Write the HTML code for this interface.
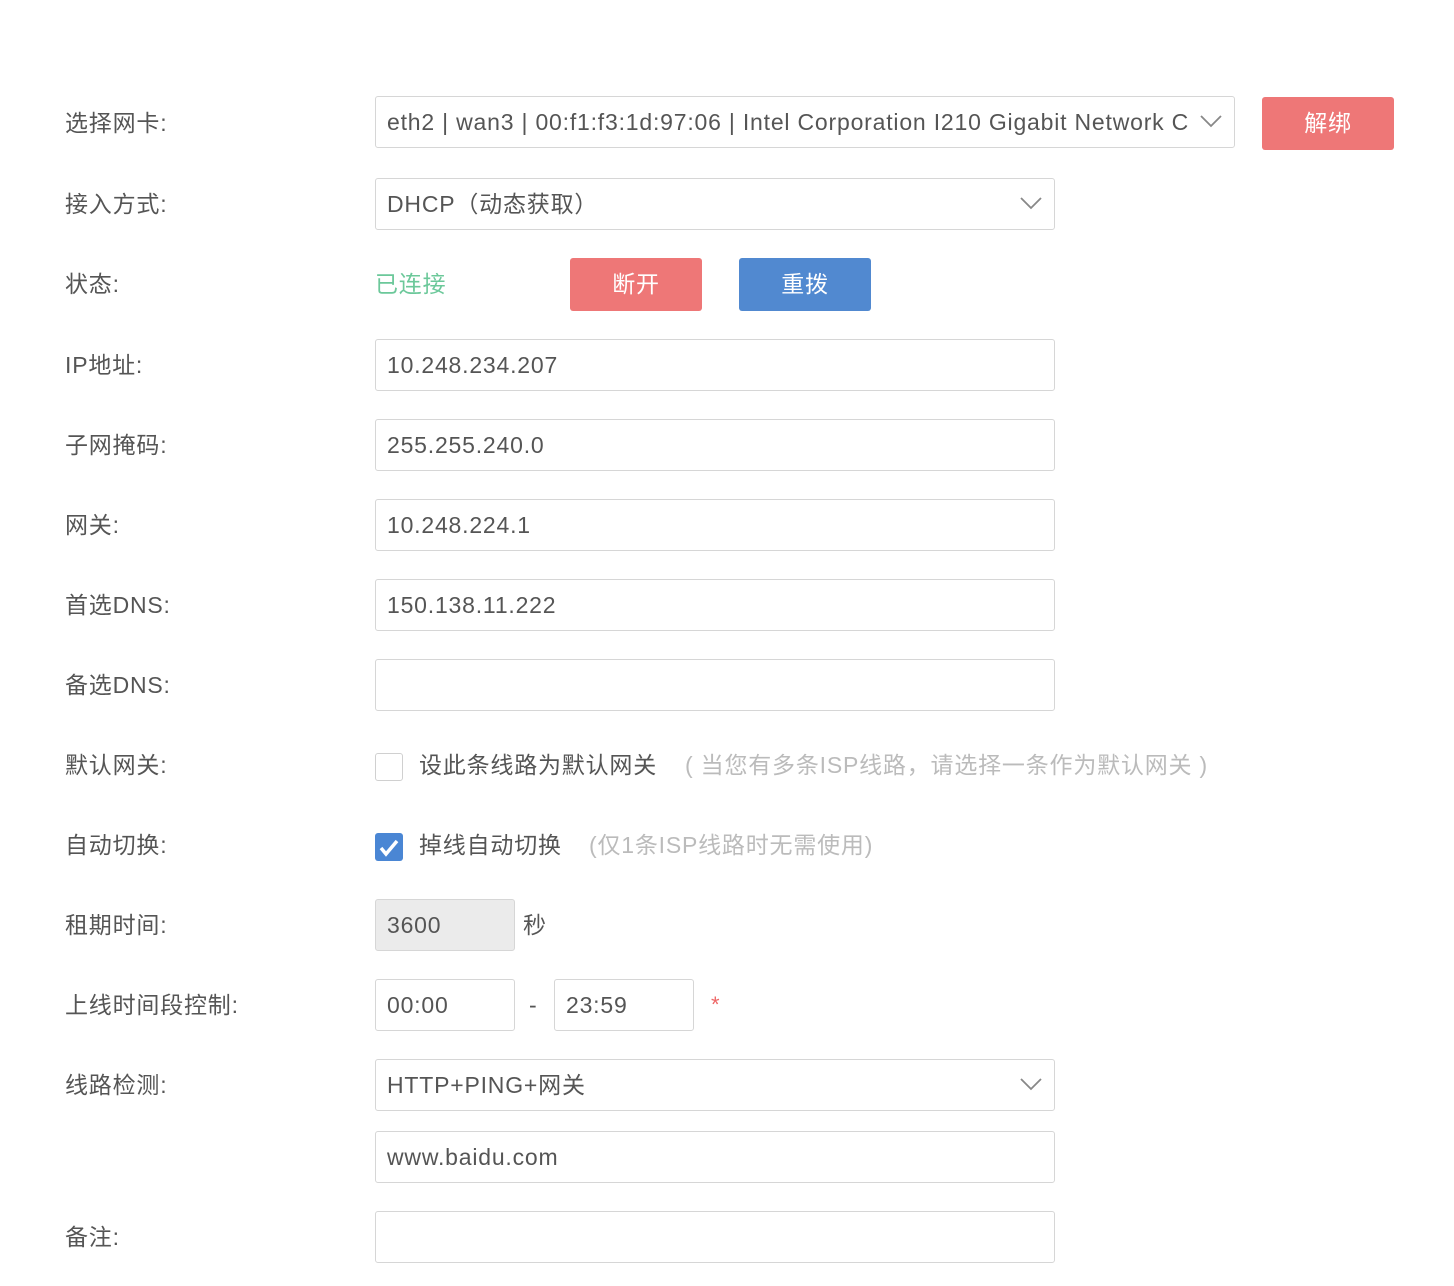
<!DOCTYPE html>
<html><head><meta charset="utf-8"><style>
body{margin:0;width:1454px;height:1286px;background:#fff;font-family:"Liberation Sans","Noto Sans CJK SC",sans-serif;color:#555;position:relative;overflow:hidden;letter-spacing:0.8px}
.a{position:absolute;white-space:nowrap}
.l{position:absolute;left:65px;font-size:23px;color:#555;line-height:30px}
.in{position:absolute;left:375px;width:678px;height:50px;border:1px solid #d6d6d6;border-radius:3px;font-size:23px;line-height:50px;padding-left:11px;box-sizing:content-box;color:#555;overflow:hidden;white-space:nowrap}
.chev{position:absolute;right:12px;top:17px}
.btn{position:absolute;width:132px;height:53px;border-radius:3px;color:#fff;font-size:23px;text-align:center;line-height:53px}
</style></head><body>
<div class="l" style="top:108px">选择网卡:</div>
<div class="in" style="top:96px;width:847px">eth2 | wan3 | 00:f1:f3:1d:97:06 | Intel Corporation I210 Gigabit Network C<svg class="chev" width="22" height="14" viewBox="0 0 22 14" style="background:#fff"><path d="M1 2l10 10 10-10" stroke="#888" stroke-width="1.8" fill="none"/></svg></div>
<div class="btn" style="left:1262px;top:97px;background:#ee7777">解绑</div>

<div class="l" style="top:189px">接入方式:</div>
<div class="in" style="top:178px;width:667px">DHCP（动态获取）<svg class="chev" width="22" height="14" viewBox="0 0 22 14"><path d="M1 2l10 10 10-10" stroke="#888" stroke-width="1.8" fill="none"/></svg></div>

<div class="l" style="top:269px">状态:</div>
<div class="a" style="left:375px;top:269px;font-size:23px;color:#6cc89a;line-height:30px">已连接</div>
<div class="btn" style="left:570px;top:258px;background:#ee7777">断开</div>
<div class="btn" style="left:739px;top:258px;background:#5189d0">重拨</div>

<div class="l" style="top:350px">IP地址:</div>
<div class="in" style="top:339px;width:667px">10.248.234.207</div>
<div class="l" style="top:430px">子网掩码:</div>
<div class="in" style="top:419px;width:667px">255.255.240.0</div>
<div class="l" style="top:510px">网关:</div>
<div class="in" style="top:499px;width:667px">10.248.224.1</div>
<div class="l" style="top:590px">首选DNS:</div>
<div class="in" style="top:579px;width:667px">150.138.11.222</div>
<div class="l" style="top:670px">备选DNS:</div>
<div class="in" style="top:659px;width:667px"></div>

<div class="l" style="top:750px">默认网关:</div>
<div class="a" style="left:375px;top:753px;width:26px;height:26px;border:1px solid #d0d0d0;border-radius:3px"></div>
<div class="a" style="left:419px;top:750px;font-size:23px;line-height:30px">设此条线路为默认网关</div>
<div class="a" style="left:685px;top:750px;font-size:23px;line-height:30px;color:#bbb">( 当您有多条ISP线路，请选择一条作为默认网关 )</div>

<div class="l" style="top:830px">自动切换:</div>
<div class="a" style="left:375px;top:833px;width:28px;height:28px;background:#4a86d4;border-radius:3px"><svg width="28" height="28" viewBox="0 0 28 28"><path d="M6 15l5 6 11-13" stroke="#fff" stroke-width="3.5" fill="none"/></svg></div>
<div class="a" style="left:419px;top:830px;font-size:23px;line-height:30px">掉线自动切换</div>
<div class="a" style="left:589px;top:830px;font-size:23px;line-height:30px;color:#bbb">(仅1条ISP线路时无需使用)</div>

<div class="l" style="top:910px">租期时间:</div>
<div class="in" style="top:899px;width:127px;background:#ebebeb">3600</div>
<div class="a" style="left:523px;top:910px;font-size:23px;line-height:30px">秒</div>

<div class="l" style="top:990px">上线时间段控制:</div>
<div class="in" style="top:979px;width:127px">00:00</div>
<div class="a" style="left:529px;top:990px;font-size:23px;line-height:30px">-</div>
<div class="in" style="top:979px;left:554px;width:127px">23:59</div>
<div class="a" style="left:711px;top:990px;font-size:22px;line-height:30px;color:#ee6666">*</div>

<div class="l" style="top:1070px">线路检测:</div>
<div class="in" style="top:1059px;width:667px">HTTP+PING+网关<svg class="chev" width="22" height="14" viewBox="0 0 22 14"><path d="M1 2l10 10 10-10" stroke="#888" stroke-width="1.8" fill="none"/></svg></div>
<div class="in" style="top:1131px;width:667px">www.baidu.com</div>

<div class="l" style="top:1222px">备注:</div>
<div class="in" style="top:1211px;width:667px"></div>
</body></html>
